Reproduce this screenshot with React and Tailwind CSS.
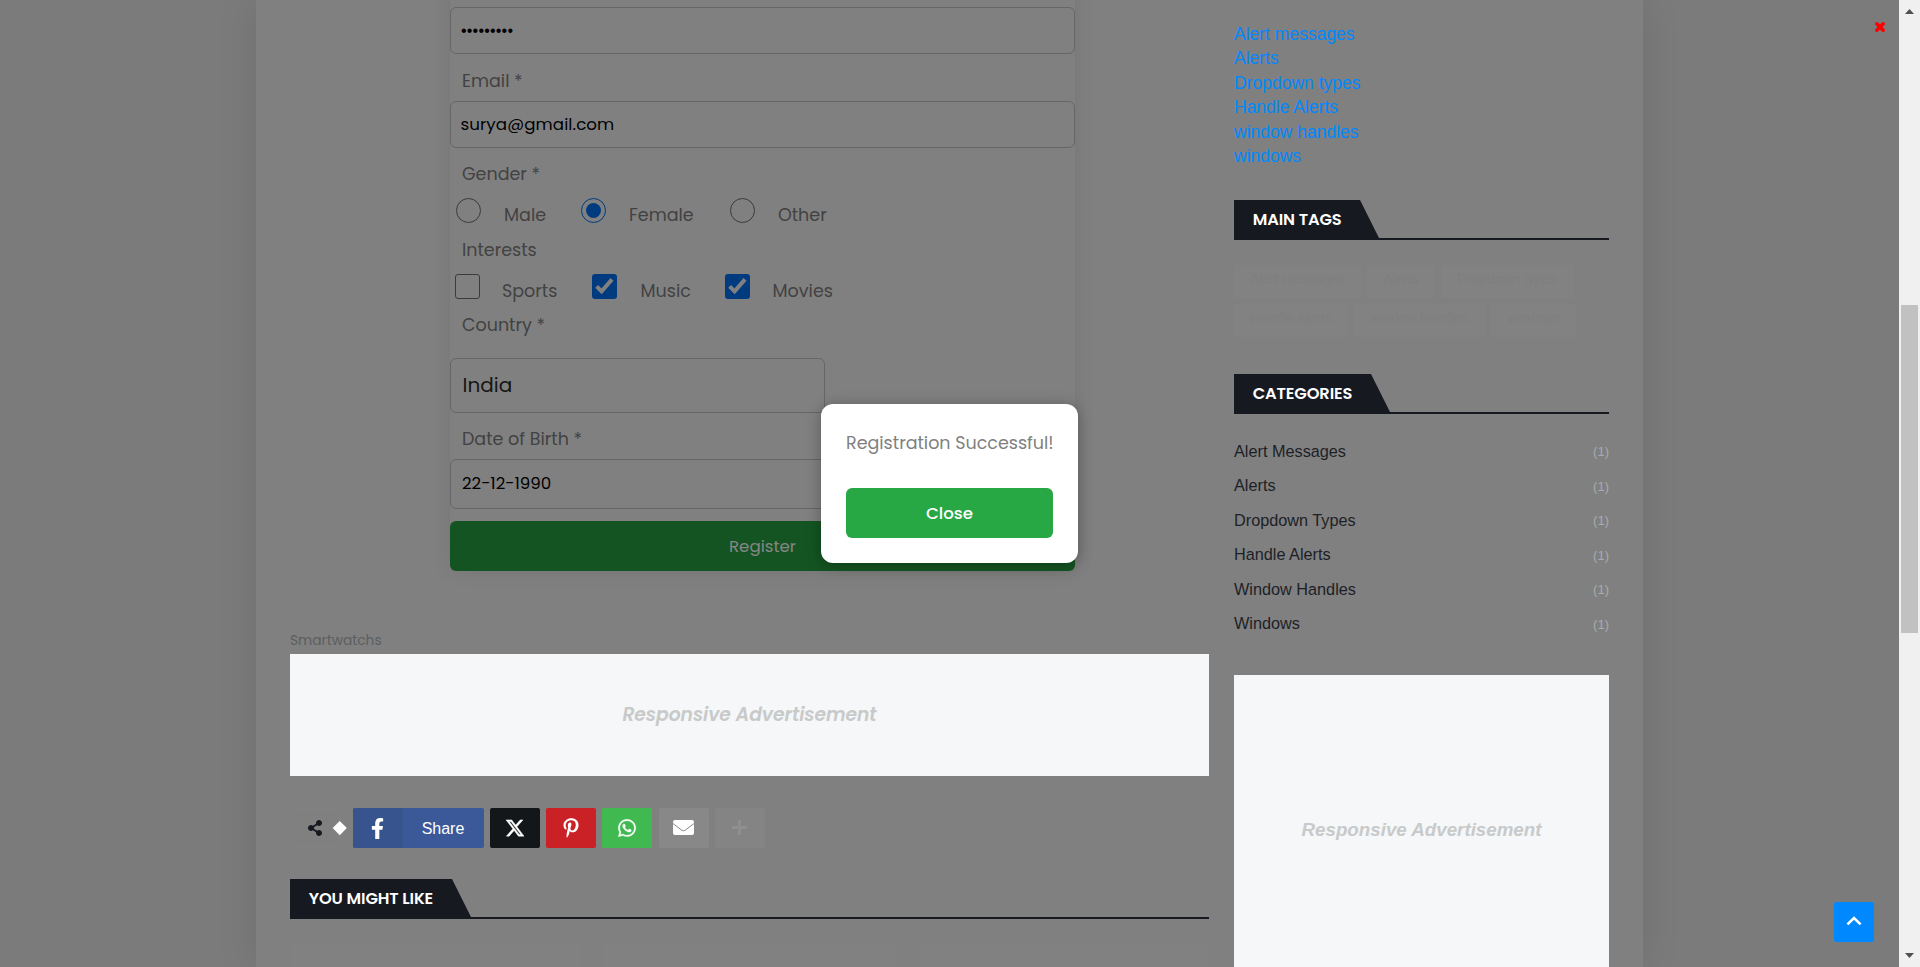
import React from "react";
import { FaFacebookF, FaPinterestP, FaShareAlt, FaWhatsapp } from "react-icons/fa";
import { FaXTwitter } from "react-icons/fa6";

const poppins = "font-[Poppins,Inter,sans-serif]";
const arial = "font-['Liberation_Sans',Arial,sans-serif]";

function Label({ children, className }) {
  return (
    <div className={`flex items-center pl-[12px] text-[17.5px] leading-none text-[#424242] ${className}`}>
      {children}
    </div>
  );
}

function Field({ children, className }) {
  return (
    <div className={`flex items-center rounded-[6px] border border-[#666666] leading-none ${className}`}>
      {children}
    </div>
  );
}

function Radio({ checked }) {
  return (
    <span
      className={`flex size-[25px] shrink-0 items-center justify-center rounded-full border ${
        checked ? "border-[#003b80]" : "border-[#3b3b3b]"
      }`}
    >
      {checked && <span className="size-[15px] rounded-full bg-[#003b80]" />}
    </span>
  );
}

function Check({ checked }) {
  if (!checked) {
    return <span className="size-[25px] shrink-0 rounded-[3px] border border-[#3b3b3b]" />;
  }
  return (
    <span className="size-[25px] shrink-0 rounded-[3px] bg-[#003b80]">
      <svg viewBox="0 0 25 25" className="size-full" fill="none" stroke="#808080" strokeWidth="4">
        <path d="M4.6 12.4 L9.6 17.4 L20 5.4" />
      </svg>
    </span>
  );
}

function Option({ control, label, className }) {
  return (
    <div className="flex items-start">
      {control}
      <span className={`text-[17.5px] leading-[34px] text-[#424242] ${className}`}>{label}</span>
    </div>
  );
}

function Heading({ title, className }) {
  return (
    <div className="h-10 border-b-2 border-[#171921]">
      <div
        className={`flex h-[38px] items-center bg-[#171921] pt-[2px] pl-[18.75px] text-[16.25px] leading-none font-semibold tracking-[-0.13px] text-white [clip-path:polygon(0_0,calc(100%-19px)_0,100%_100%,0_100%)] ${poppins} ${className}`}
      >
        {title}
      </div>
    </div>
  );
}

function ShareButton({ children, className }) {
  return (
    <div className={`flex h-10 w-[50px] items-center justify-center rounded-[2px] text-white ${className}`}>
      {children}
    </div>
  );
}

const links = ["Alert messages", "Alerts", "Dropdown types", "Handle Alerts", "window handles", "windows"];
const tags = [
  ["Alert messages", "w-[127px]"],
  ["Alerts", "w-[68px]"],
  ["Dropdown types", "w-[132px]"],
  ["Handle Alerts", "w-[114px]"],
  ["window handles", "w-[131px]"],
  ["windows", "w-[85px]"],
];
const categories = ["Alert Messages", "Alerts", "Dropdown Types", "Handle Alerts", "Window Handles", "Windows"];

function RegistrationForm() {
  return (
    <form className="-mt-10 ml-[160px] flex w-[625px] flex-col rounded-[6px] pt-[47px] shadow-[0_0_20px_rgba(0,0,0,0.09)]">
      <Field className="h-[47px] pl-[10px] text-base tracking-[0.2px] text-black">
        <span className={arial}>•••••••••</span>
      </Field>
      <Label className="h-[47px] pt-[9px]">Email *</Label>
      <Field className="h-[47px] pb-px pl-[9.5px] text-[16.67px] tracking-[0.1px] text-black">surya@gmail.com</Field>
      <Label className="h-[50px] pt-[4px]">Gender *</Label>
      <div className="grid h-[34px] grid-cols-[125px_149px_1fr] pl-[6px]">
        <Option control={<Radio />} label="Male" className="ml-[23px]" />
        <Option control={<Radio checked />} label="Female" className="ml-[23px]" />
        <Option control={<Radio />} label="Other" className="ml-[23px]" />
      </div>
      <Label className="h-[42px] pb-[4px]">Interests</Label>
      <div className="grid h-[34px] grid-cols-[137px_133px_1fr] pl-[5px]">
        <Option control={<Check />} label="Sports" className="ml-[22px]" />
        <Option control={<Check checked />} label="Music" className="ml-[23.5px]" />
        <Option control={<Check checked />} label="Movies" className="ml-[22.5px]" />
      </div>
      <Label className="h-[50px] pb-[15px]">Country *</Label>
      <Field className="h-[55px] w-[375px] pb-[2px] pl-[11.5px] text-[20px] text-[#161616]">India</Field>
      <Label className="h-[46px] pt-[8px]">Date of Birth *</Label>
      <Field className="h-[50px] pl-[11px] text-[16.67px] text-black">
        <span className="-mt-px">22-12-1990</span>
      </Field>
      <div className="mt-3 flex h-[50px] items-center justify-center rounded-[6px] bg-[#145422] pt-px text-[16.67px] text-[#868686]">
        Register
      </div>
    </form>
  );
}

function Sidebar() {
  return (
    <aside className={`flex h-full w-[375px] flex-col pt-[21.5px] ${arial}`}>
      <ul className="text-[17.5px] leading-[24.5px] text-[#0088ff]">
        {links.map((l) => (
          <li key={l}>{l}</li>
        ))}
      </ul>
      <div className="mt-[31.5px]">
        <Heading title="MAIN TAGS" className="w-[145px]" />
      </div>
      <div className="mt-[25px] flex flex-wrap gap-[6px]">
        {tags.map(([t, w]) => (
          <span
            key={t}
            className={`flex h-[33px] items-center justify-center rounded-[2px] bg-[#828282] pb-[2px] text-[13.75px] text-[#7f7f80] ${w}`}
          >
            {t}
          </span>
        ))}
      </div>
      <div className="mt-[37px]">
        <Heading title="CATEGORIES" className="w-[156px]" />
      </div>
      <ul className="mt-[19.5px]">
        {categories.map((c) => (
          <li key={c} className="flex h-[34.5px] items-center justify-between text-[16.25px] text-[#1d1f27]">
            <span>{c}</span>
            <span className="pt-[2px] text-[13px] text-[#a6acb0]">(1)</span>
          </li>
        ))}
      </ul>
      <div className="mt-[34.5px] flex h-[310px] shrink-0 items-center justify-center bg-[#f5f7f9] text-[18.75px] font-bold text-[#c8caca] italic">
        Responsive Advertisement
      </div>
    </aside>
  );
}

function ShareBar() {
  return (
    <div className={`mt-8 flex h-10 ${arial}`}>
      <div className="relative mr-[13px] flex w-[50px] items-center justify-center rounded-[2px] border border-[#828282] text-[#171921]">
        <FaShareAlt className="size-4" />
        <span className="absolute top-[13.5px] right-[-5.5px] size-[9.5px] rotate-45 bg-white" />
      </div>
      <div className="mr-[6px] flex w-[131px] overflow-hidden rounded-[2px] bg-[#3b5999] text-white">
        <span className="flex w-[50px] items-center justify-center bg-[#38548f]">
          <FaFacebookF className="mr-px size-[21px]" />
        </span>
        <span className="flex flex-1 items-center justify-center pt-px pr-px text-base">Share</span>
      </div>
      <ShareButton className="mr-[6px] bg-[#14171a]">
        <FaXTwitter className="size-5 stroke-white stroke-[12px]" />
      </ShareButton>
      <ShareButton className="mr-[6px] bg-[#ca2127]">
        <FaPinterestP className="size-5" />
      </ShareButton>
      <ShareButton className="mr-[7px] bg-[#40ba50]">
        <FaWhatsapp className="size-5 stroke-white stroke-[8px]" />
      </ShareButton>
      <ShareButton className="mr-[6px] bg-[#888888]">
        <svg viewBox="0 0 21 15" className="mr-px mb-px h-[15px] w-[21px]" fill="none">
          <rect width="21" height="15" rx="2" fill="#ffffff" />
          <path d="M0 3.6L8.8 10.2Q10.5 11.4 12.2 10.2L21 3.6" stroke="#888888" strokeWidth="1" />
        </svg>
      </ShareButton>
      <ShareButton className="bg-[#848484]">
        <svg viewBox="0 0 15 15" className="mr-px mb-px size-[15px]" stroke="#8f8f8f" strokeWidth="3">
          <path d="M7.5 0V15M0 7.5H15" />
        </svg>
      </ShareButton>
    </div>
  );
}

function Scrollbar() {
  return (
    <div className="flex h-full w-[21px] flex-col items-center bg-[#f0f0f0]">
      <svg viewBox="0 0 9 5" className="mt-[9px] h-[5px] w-[9px]" fill="#505050">
        <path d="M0 5L4.5 0L9 5Z" />
      </svg>
      <div className="mt-[291px] h-[328px] w-[17px] bg-[#c1c1c1]" />
      <svg viewBox="0 0 9 5" className="mt-[320px] h-[5px] w-[9px]" fill="#505050">
        <path d="M0 0L4.5 5L9 0Z" />
      </svg>
    </div>
  );
}

export default function App() {
  return (
    <div className={`relative flex h-[967px] w-[1920px] overflow-hidden bg-[#7b7b7b] ${poppins}`}>
      <div className="flex h-full w-[1899px] justify-center overflow-hidden">
        <div className="flex h-full w-[1387px] gap-[25px] bg-[#808080] pl-[34px] shadow-[0_0_38px_rgba(0,0,0,0.1)]">
          <main className="w-[919px]">
            <RegistrationForm />
            <div className="mt-[55px] h-7 pt-px text-[13.75px] leading-7 text-[#5b5e5f]">Smartwatchs</div>
            <div className="flex h-[122px] items-center justify-center bg-[#f5f7f9] text-[18.75px] font-semibold tracking-[-0.07px] text-[#c8caca] italic">
              Responsive Advertisement
            </div>
            <ShareBar />
            <div className="mt-[31px]">
              <Heading title="YOU MIGHT LIKE" className="w-[181px]" />
            </div>
            <div className="mt-6 grid h-6 grid-cols-3 gap-6">
              <div className="bg-[#818181]" />
              <div className="bg-[#818181]" />
              <div className="bg-[#818181]" />
            </div>
          </main>
          <Sidebar />
        </div>
      </div>
      <Scrollbar />

      <div className="absolute top-[404px] left-[821px] flex h-[159px] w-[257px] flex-col rounded-xl bg-white p-[25px] shadow-[0_2px_15px_rgba(0,0,0,0.3)]">
        <p className="text-center text-[17.5px] leading-7 whitespace-nowrap text-[#808080]">
          Registration Successful!
        </p>
        <button className="mt-auto h-[50px] rounded-[6px] bg-[#28a745] pt-px text-[16.67px] font-medium text-white">
          Close
        </button>
      </div>

      <svg
        viewBox="0 0 12 12"
        className="absolute top-[21px] left-[1874px] size-3"
        stroke="#ff0000"
        strokeWidth="3.6"
        strokeLinecap="round"
      >
        <path d="M2.8 2.8L9.2 9.2M9.2 2.8L2.8 9.2" />
      </svg>
      <div className="absolute top-[902px] left-[1834px] flex size-10 items-center justify-center rounded-[2px] bg-[#0088ff]">
        <svg viewBox="0 0 16 10" className="mb-[2px] h-[10px] w-4" fill="none" stroke="#ffffff" strokeWidth="2.6">
          <path d="M1.4 8.4L8 2L14.6 8.4" />
        </svg>
      </div>
    </div>
  );
}
